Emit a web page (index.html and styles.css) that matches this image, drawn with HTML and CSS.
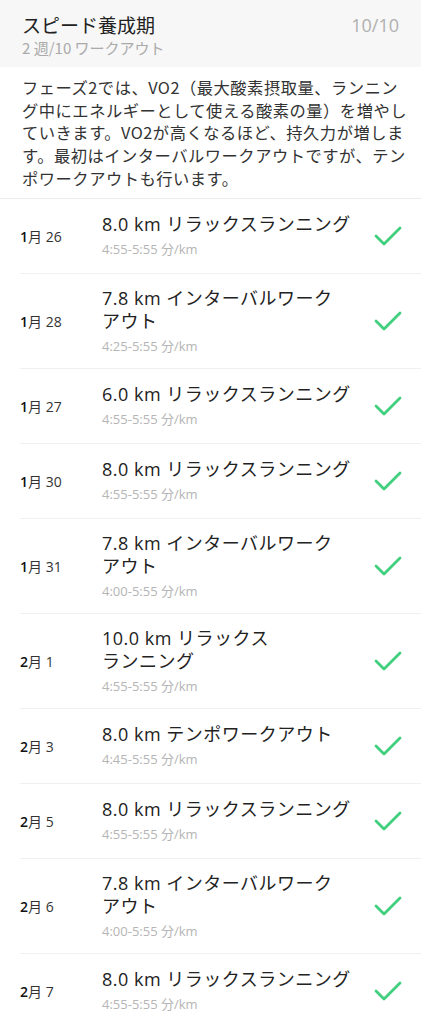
FILE: index.html
```html
<!DOCTYPE html>
<html lang="ja">
<head>
  <meta charset="UTF-8">
  <title>スピード養成期</title>
  <link rel="stylesheet" href="styles.css">
</head>
<body>

  <div class="phase-header">
    <div>
      <div class="phase-title">スピード養成期</div>
      <div class="phase-sub">2 週/10 ワークアウト</div>
    </div>
    <div class="phase-count">10/10</div>
  </div>

  <p class="phase-desc">
    フェーズ2では、VO2（最大酸素摂取量、ランニン<br>
    グ中にエネルギーとして使える酸素の量）を増やし<br>
    ていきます。VO2が高くなるほど、持久力が増しま<br>
    す。最初はインターバルワークアウトですが、テン<br>
    ポワークアウトも行います。
  </p>

  <ul class="workout-list">
    <li class="workout">
      <div class="w-date"><b>1</b>月 26</div>
      <div class="w-info">
        <div class="w-title">8.0 km リラックスランニング</div>
        <div class="w-pace">4:55-5:55 分/km</div>
      </div>
      <svg class="w-check" viewBox="0 0 28 22"><polyline points="2,11 10,19 26,3"/></svg>
    </li>
    <li class="workout">
      <div class="w-date"><b>1</b>月 28</div>
      <div class="w-info">
        <div class="w-title">7.8 km インターバルワーク<br>アウト</div>
        <div class="w-pace">4:25-5:55 分/km</div>
      </div>
      <svg class="w-check" viewBox="0 0 28 22"><polyline points="2,11 10,19 26,3"/></svg>
    </li>
    <li class="workout">
      <div class="w-date"><b>1</b>月 27</div>
      <div class="w-info">
        <div class="w-title">6.0 km リラックスランニング</div>
        <div class="w-pace">4:55-5:55 分/km</div>
      </div>
      <svg class="w-check" viewBox="0 0 28 22"><polyline points="2,11 10,19 26,3"/></svg>
    </li>
    <li class="workout">
      <div class="w-date"><b>1</b>月 30</div>
      <div class="w-info">
        <div class="w-title">8.0 km リラックスランニング</div>
        <div class="w-pace">4:55-5:55 分/km</div>
      </div>
      <svg class="w-check" viewBox="0 0 28 22"><polyline points="2,11 10,19 26,3"/></svg>
    </li>
    <li class="workout">
      <div class="w-date"><b>1</b>月 31</div>
      <div class="w-info">
        <div class="w-title">7.8 km インターバルワーク<br>アウト</div>
        <div class="w-pace">4:00-5:55 分/km</div>
      </div>
      <svg class="w-check" viewBox="0 0 28 22"><polyline points="2,11 10,19 26,3"/></svg>
    </li>
    <li class="workout">
      <div class="w-date"><b>2</b>月 1</div>
      <div class="w-info">
        <div class="w-title">10.0 km リラックス<br>ランニング</div>
        <div class="w-pace">4:55-5:55 分/km</div>
      </div>
      <svg class="w-check" viewBox="0 0 28 22"><polyline points="2,11 10,19 26,3"/></svg>
    </li>
    <li class="workout">
      <div class="w-date"><b>2</b>月 3</div>
      <div class="w-info">
        <div class="w-title">8.0 km テンポワークアウト</div>
        <div class="w-pace">4:45-5:55 分/km</div>
      </div>
      <svg class="w-check" viewBox="0 0 28 22"><polyline points="2,11 10,19 26,3"/></svg>
    </li>
    <li class="workout">
      <div class="w-date"><b>2</b>月 5</div>
      <div class="w-info">
        <div class="w-title">8.0 km リラックスランニング</div>
        <div class="w-pace">4:55-5:55 分/km</div>
      </div>
      <svg class="w-check" viewBox="0 0 28 22"><polyline points="2,11 10,19 26,3"/></svg>
    </li>
    <li class="workout">
      <div class="w-date"><b>2</b>月 6</div>
      <div class="w-info">
        <div class="w-title">7.8 km インターバルワーク<br>アウト</div>
        <div class="w-pace">4:00-5:55 分/km</div>
      </div>
      <svg class="w-check" viewBox="0 0 28 22"><polyline points="2,11 10,19 26,3"/></svg>
    </li>
    <li class="workout">
      <div class="w-date"><b>2</b>月 7</div>
      <div class="w-info">
        <div class="w-title">8.0 km リラックスランニング</div>
        <div class="w-pace">4:55-5:55 分/km</div>
      </div>
      <svg class="w-check" viewBox="0 0 28 22"><polyline points="2,11 10,19 26,3"/></svg>
    </li>
  </ul>

</body>
</html>
```

FILE: styles.css
```css
body {
  margin: 0;
  background: #fff;
  font-family: "Open Sans", "Noto Sans CJK JP", sans-serif;
  color: #222;
}

.phase-header {
  display: flex;
  justify-content: space-between;
  align-items: flex-start;
  height: 67px;
  box-sizing: border-box;
  padding: 12px 22px 0 22px;
  background: #f7f7f7;
}

.phase-title {
  font-family: "Noto Sans CJK JP", sans-serif;
  font-size: 19px;
  line-height: 26px;
  color: #222;
}

.phase-sub {
  font-family: "Noto Sans CJK JP", sans-serif;
  font-size: 15px;
  line-height: 20px;
  color: #aaa;
}

.phase-count {
  font-size: 18px;
  line-height: 26px;
  color: #b0b0b0;
}

.phase-desc {
  margin: 0;
  padding: 9px 8px 8px 22px;
  font-family: "Noto Sans CJK JP", sans-serif;
  font-size: 16.3px;
  line-height: 22.7px;
  letter-spacing: 0.5px;
  color: #333;
  border-bottom: 1px solid #ececec;
}

.workout-list {
  list-style: none;
  margin: 0;
  padding: 0 0 0 20px;
}

.workout {
  display: flex;
  align-items: center;
  box-sizing: border-box;
  min-height: 75px;
  padding: 13px 0;
  border-bottom: 1px solid #f0f0f0;
}

.w-date {
  width: 82px;
  flex-shrink: 0;
  font-size: 14px;
  color: #333;
}

.w-date b {
  font-weight: 600;
  color: #111;
}

.w-info {
  flex: 1;
}

.w-title {
  font-size: 18px;
  line-height: 23px;
  letter-spacing: 0.5px;
  color: #222;
}

.w-pace {
  margin-top: 4px;
  font-size: 13px;
  line-height: 18px;
  color: #b5b5b5;
}

.w-check {
  width: 28px;
  height: 22px;
  margin-right: 19px;
  fill: none;
  stroke: #3fcf7d;
  stroke-width: 2.8;
  stroke-linecap: round;
  stroke-linejoin: round;
}
```
